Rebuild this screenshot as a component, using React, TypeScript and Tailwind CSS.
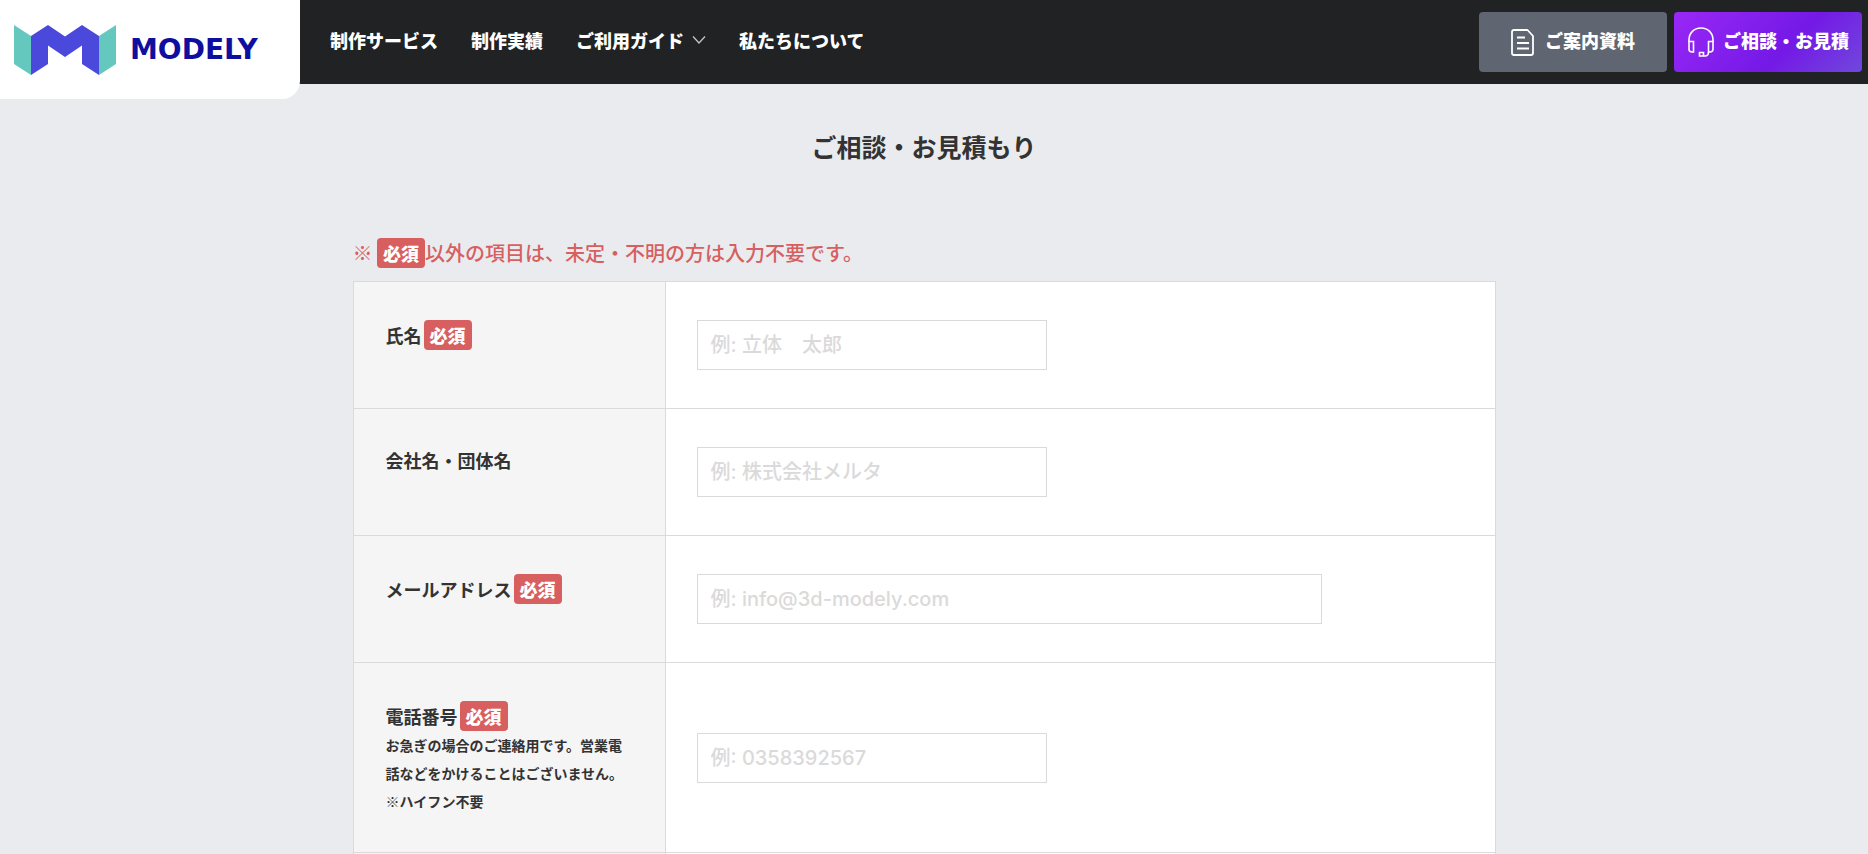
import { useState } from "react";

type Field = {
  id: string;
  label: string;
  placeholder: string;
  type: string;
  required?: boolean;
  wide?: boolean;
  note?: string[];
};

const fields: Field[] = [
  { id: "name", label: "氏名", placeholder: "例: 立体　太郎", type: "text", required: true },
  { id: "company", label: "会社名・団体名", placeholder: "例: 株式会社メルタ", type: "text" },
  {
    id: "email",
    label: "メールアドレス",
    placeholder: "例: info@3d-modely.com",
    type: "email",
    required: true,
    wide: true,
  },
  {
    id: "tel",
    label: "電話番号",
    placeholder: "例: 0358392567",
    type: "tel",
    required: true,
    note: ["お急ぎの場合のご連絡用です。営業電話などをかけることはございません。", "※ハイフン不要"],
  },
];

function Logo() {
  return (
    <a
      href="#"
      className="flex h-[99px] w-[300px] shrink-0 items-center gap-3.5 rounded-br-[18px] bg-white pl-3.5"
    >
      <svg width="102" height="50" viewBox="0 0 102 50" aria-hidden="true">
        <path d="M0 0L17 11V50L0 39Z" fill="#64c8be" />
        <path d="M102 0L85 11V50L102 39Z" fill="#64c8be" />
        <path
          d="M17 11L34 0L51 11.500L68 0L85 11V50L68 39V20.500L51 32L34 20.500V39L17 50Z"
          fill="#4a49db"
        />
      </svg>
      <span className="font-['DejaVu_Sans',sans-serif] text-[28px] leading-8 font-bold text-[#0f0f9f]">
        MODELY
      </span>
    </a>
  );
}

function DocumentIcon() {
  return (
    <svg width="24" height="28" viewBox="0 0 24 28" fill="none" stroke="currentColor" strokeWidth="1.800" aria-hidden="true">
      <path d="M3 2H16.500L22 8V25Q22 27 20 27H3Q1 27 1 25V4Q1 2 3 2Z" strokeLinejoin="round" />
      <path d="M6 9.500H14M6 15H18M6 20.500H18" />
    </svg>
  );
}

function HeadsetIcon() {
  return (
    <svg width="28" height="30" viewBox="0 0 28 30" fill="none" stroke="currentColor" strokeWidth="1.600" aria-hidden="true">
      <path d="M2 15V13C2 6 7 1 14 1S26 6 26 13V15" />
      <path d="M2 14.500H6.500V25H5Q2 25 2 22ZM26 14.500H21.500V25H23Q26 25 26 22Z" />
      <path d="M21.500 25Q21.500 29 18 29H12.500V25.500H16.500V29" />
    </svg>
  );
}

function Required() {
  return (
    <span className="inline-block rounded bg-[#d75f5f] px-1.5 py-0.5 text-lg leading-[26px] font-black text-white">
      必須
    </span>
  );
}

function Header() {
  return (
    <header className="flex h-[84px] bg-[#202223] text-lg font-black text-white">
      <Logo />
      <nav className="flex items-center gap-[33px] pb-1 pl-[30px] whitespace-nowrap">
        <a href="#">制作サービス</a>
        <a href="#">制作実績</a>
        <a href="#" className="flex items-center gap-2">
          ご利用ガイド
          <svg width="14" height="8" viewBox="0 0 14 8" fill="none" stroke="#c4c4cc" strokeWidth="1.300" aria-hidden="true">
            <path d="M1 .5L7 7L13 .5" />
          </svg>
        </a>
        <a href="#">私たちについて</a>
      </nav>
      <div className="ml-auto flex items-center gap-[7px] pr-1.5 whitespace-nowrap">
        <a href="#" className="flex h-[60px] w-[188px] items-center justify-center gap-2.5 rounded bg-[#5f6571]">
          <DocumentIcon />
          <span className="pb-1">ご案内資料</span>
        </a>
        <a
          href="#"
          className="flex h-[60px] w-[188px] items-center justify-center gap-2 rounded bg-[linear-gradient(135deg,#9a28f7_0%,#7419e6_60%,#7048dc_100%)]"
        >
          <HeadsetIcon />
          <span className="pb-1">ご相談・お見積</span>
        </a>
      </div>
    </header>
  );
}

export default function App() {
  const [values, setValues] = useState<Record<string, string>>({});

  return (
    <div className="min-h-screen bg-[#eaebef] font-['Noto_Sans_CJK_JP',sans-serif] text-[#333]">
      <Header />
      <main className="pt-[43px] pr-5">
        <h1 className="text-center text-[25px] leading-[38px] font-semibold">ご相談・お見積もり</h1>
        <form className="mx-auto mt-[73px] w-full max-w-[1143px]">
          <p className="mb-[13px] text-xl leading-[30px] font-medium text-[#d75f5f]">
            ※ <Required />
            以外の項目は、未定・不明の方は入力不要です。
          </p>
          <table className="w-full table-fixed border-collapse border border-b-0 border-[#dadada] bg-white">
            <tbody>
              {fields.map((field) => (
                <tr key={field.id} className="border-b border-[#dadada]">
                  <th
                    scope="row"
                    className="w-[312px] border-r border-[#dadada] bg-[#f5f5f5] px-8 pt-[38px] pb-[37px] text-left align-top font-semibold"
                  >
                    <label htmlFor={field.id} className="flex items-center gap-0.5 text-lg leading-[26px]">
                      {field.label}
                      {field.required && <Required />}
                    </label>
                    {field.note?.map((line) => (
                      <p key={line} className="text-sm leading-7">
                        {line}
                      </p>
                    ))}
                  </th>
                  <td className="px-[31px] py-[38px] align-middle">
                    <input
                      id={field.id}
                      type={field.type}
                      required={field.required}
                      placeholder={field.placeholder}
                      value={values[field.id] ?? ""}
                      onChange={(e) => setValues({ ...values, [field.id]: e.target.value })}
                      className={`block h-[50px] max-w-full border border-[#dadada] bg-white px-[13px] font-['Inter','Noto_Sans_CJK_JP',sans-serif] text-xl font-medium placeholder:text-[#dadada] ${
                        field.wide ? "w-[625px]" : "w-[350px]"
                      }`}
                    />
                  </td>
                </tr>
              ))}
              <tr>
                <td className="h-0.5 border-r border-[#dadada] bg-[#f5f5f5]" />
                <td className="h-0.5" />
              </tr>
            </tbody>
          </table>
        </form>
      </main>
    </div>
  );
}
